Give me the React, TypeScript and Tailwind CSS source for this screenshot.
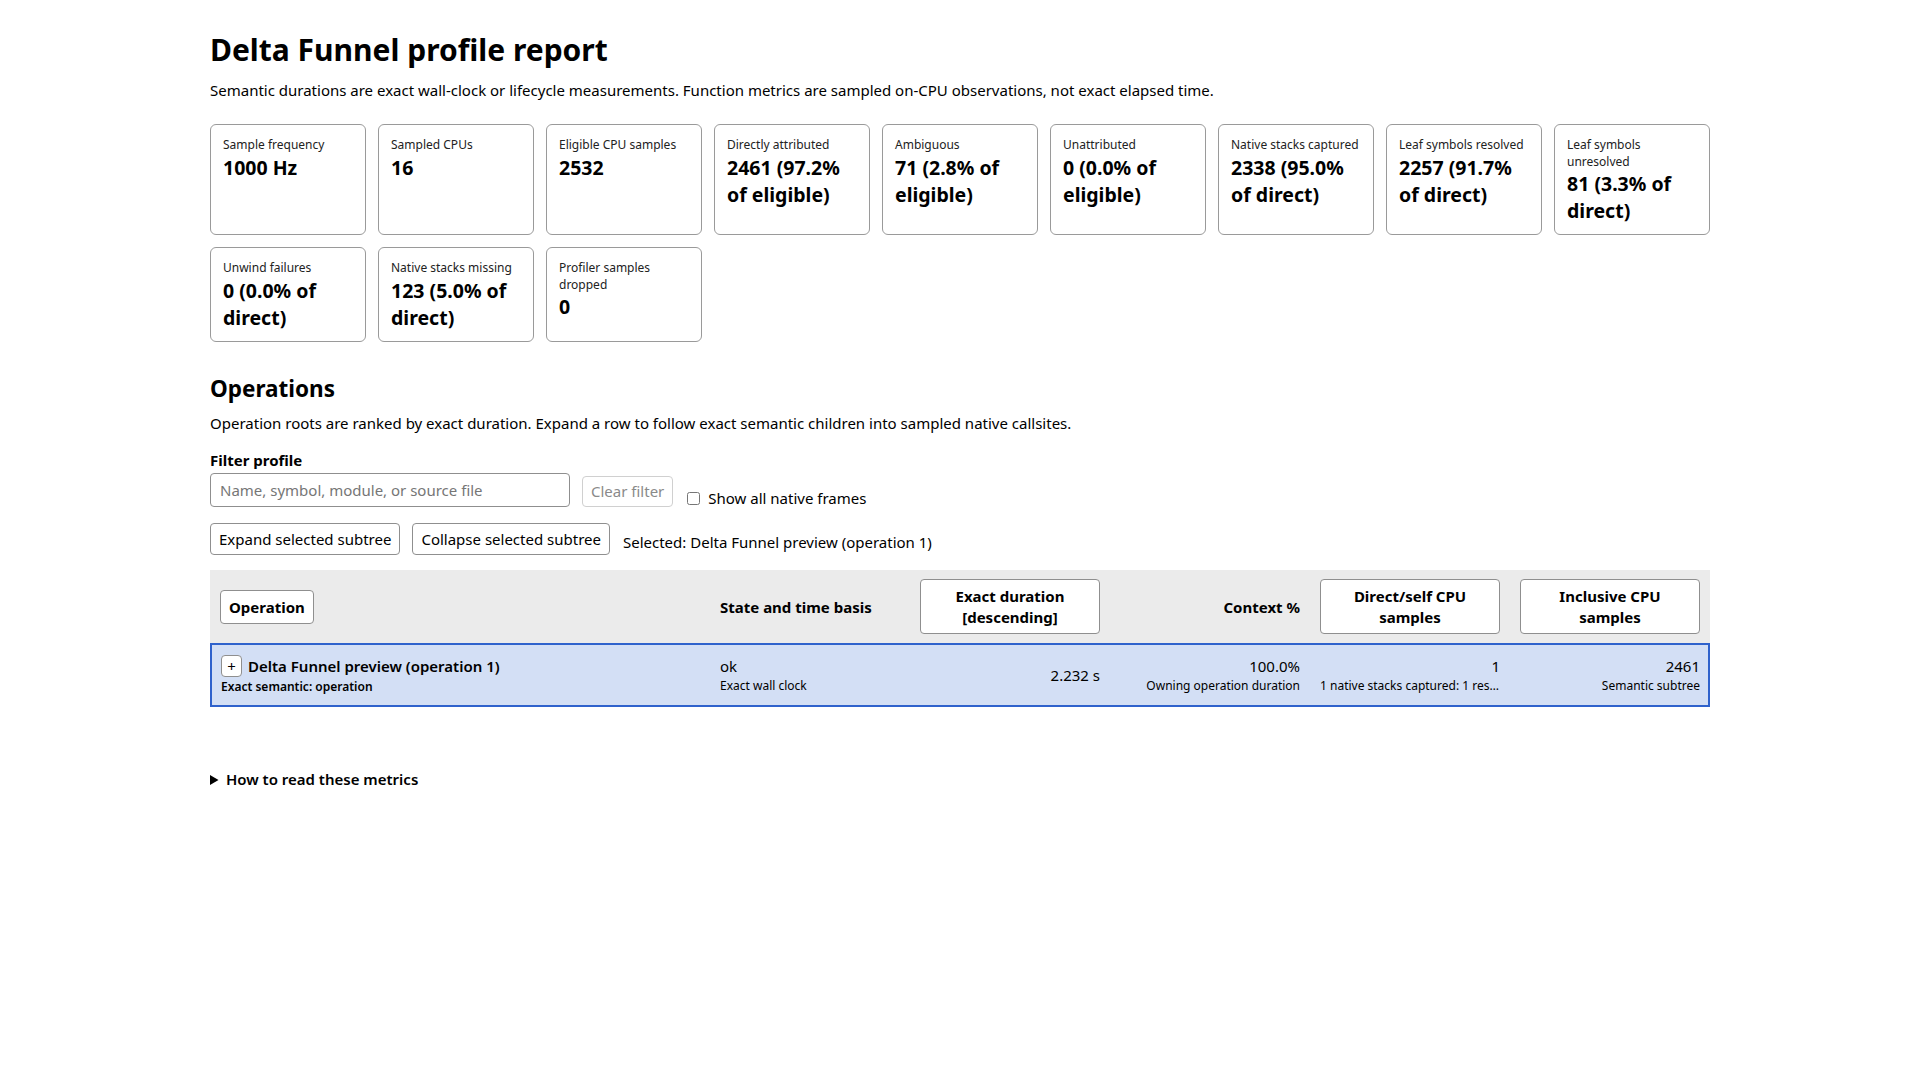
import { useState } from "react";

const cards = [
  { label: "Sample frequency", value: "1000 Hz" },
  { label: "Sampled CPUs", value: "16" },
  { label: "Eligible CPU samples", value: "2532" },
  { label: "Directly attributed", value: "2461 (97.2% of eligible)" },
  { label: "Ambiguous", value: "71 (2.8% of eligible)" },
  { label: "Unattributed", value: "0 (0.0% of eligible)" },
  { label: "Native stacks captured", value: "2338 (95.0% of direct)" },
  { label: "Leaf symbols resolved", value: "2257 (91.7% of direct)" },
  { label: "Leaf symbols unresolved", value: "81 (3.3% of direct)" },
  { label: "Unwind failures", value: "0 (0.0% of direct)" },
  { label: "Native stacks missing", value: "123 (5.0% of direct)" },
  { label: "Profiler samples dropped", value: "0" },
];

function SortButton({ children }: { children: React.ReactNode }) {
  return (
    <button className="w-full rounded-[4px] border border-[#8f8f8f] bg-white px-2 py-[6px] text-center text-[15px] font-bold leading-[20.4px] text-black">
      {children}
    </button>
  );
}

export default function App() {
  const [filter, setFilter] = useState("");
  const [showAll, setShowAll] = useState(false);

  return (
    <div className="min-h-screen bg-white font-['Noto_Sans',sans-serif] text-[15px] leading-[20.4px] text-black">
      <main className="mx-auto max-w-[1500px] pt-[29px]">
        <h1 className="text-[30px] font-bold leading-[41px]">Delta Funnel profile report</h1>
        <p className="mt-[10px]">
          Semantic durations are exact wall-clock or lifecycle measurements. Function metrics are sampled on-CPU
          observations, not exact elapsed time.
        </p>

        <div className="mt-[24px] grid grid-cols-9 gap-3">
          {cards.map((c) => (
            <div key={c.label} className="rounded-[6px] border border-[#9a9a9a] px-3 pb-[10px] pt-3">
              <div className="text-[12px] leading-[16.4px] text-[#222]">{c.label}</div>
              <div className="text-[19.5px] font-bold leading-[27px]">{c.value}</div>
            </div>
          ))}
        </div>

        <h2 className="mt-[32px] text-[22.5px] font-bold leading-[30.6px]">Operations</h2>
        <p className="mt-[9px]">
          Operation roots are ranked by exact duration. Expand a row to follow exact semantic children into sampled
          native callsites.
        </p>

        <div className="mt-[16px]">
          <label className="block font-bold">Filter profile</label>
          <div className="mt-[3px] flex items-start">
            <input
              value={filter}
              onChange={(e) => setFilter(e.target.value)}
              placeholder="Name, symbol, module, or source file"
              className="h-[34px] w-[360px] rounded-[4px] border border-[#8f8f8f] px-[9px] text-[15px] placeholder:text-[#767676]"
            />
            <button
              disabled
              className="ml-[12px] mt-[3px] h-[31px] rounded-[4px] border border-[#d0d0d0] px-[8px] text-[15px] text-[#8a8a8a]"
            >
              Clear filter
            </button>
            <label className="ml-[14px] mt-[15px] flex items-center gap-[8px]">
              <input
                type="checkbox"
                checked={showAll}
                onChange={(e) => setShowAll(e.target.checked)}
                className="h-[13px] w-[13px]"
              />
              Show all native frames
            </label>
          </div>
          <div className="mt-[15px] flex items-start gap-3">
            <button className="h-[32px] rounded-[4px] border border-[#8f8f8f] px-[8px]">Expand selected subtree</button>
            <button className="h-[32px] rounded-[4px] border border-[#8f8f8f] px-[8px]">Collapse selected subtree</button>
            <span className="ml-[1px] mt-[9px]">Selected: Delta Funnel preview (operation 1)</span>
          </div>
        </div>

        <div className="mt-[15px]">
          <div className="grid grid-cols-[500px_200px_200px_200px_200px_200px] items-center bg-[#ebebeb] py-[9px]">
            <div className="px-[10px]">
              <button className="rounded-[4px] border border-[#8f8f8f] bg-white px-[8px] py-[5.5px] font-bold">
                Operation
              </button>
            </div>
            <div className="px-[10px] font-bold">State and time basis</div>
            <div className="px-[10px]">
              <SortButton>
                Exact duration
                <br />
                [descending]
              </SortButton>
            </div>
            <div className="px-[10px] text-right font-bold">Context %</div>
            <div className="px-[10px]">
              <SortButton>
                Direct/self CPU
                <br />
                samples
              </SortButton>
            </div>
            <div className="px-[10px]">
              <SortButton>
                Inclusive CPU
                <br />
                samples
              </SortButton>
            </div>
          </div>

          <div className="grid grid-cols-[498px_200px_200px_200px_200px_198px] items-center border-2 border-[#2f62cc] bg-[#d3dff5] pb-[9px] pt-[10px]">
            <div className="pl-[9px] pr-[10px]">
              <div className="flex items-center gap-[6px]">
                <button className="flex h-[22px] w-[21px] items-center justify-center rounded-[4px] border border-[#8f8f8f] bg-white text-[15px] leading-none">
                  +
                </button>
                <span className="font-semibold">Delta Funnel preview (operation 1)</span>
              </div>
              <div className="mt-[2px] text-[12px] font-semibold leading-[16.4px]">Exact semantic: operation</div>
            </div>
            <div className="px-[10px]">
              <div>ok</div>
              <div className="mt-[2px] text-[12px] leading-[16.4px]">Exact wall clock</div>
            </div>
            <div className="px-[10px] text-right">2.232 s</div>
            <div className="px-[10px] text-right">
              <div>100.0%</div>
              <div className="mt-[2px] truncate text-[12px] leading-[16.4px]">Owning operation duration</div>
            </div>
            <div className="px-[10px] text-right">
              <div>1</div>
              <div className="mt-[2px] truncate text-[12px] leading-[16.4px]">
                1 native stacks captured: 1 resolved leaf symbols
              </div>
            </div>
            <div className="pl-[10px] pr-[8px] text-right">
              <div>2461</div>
              <div className="mt-[2px] truncate text-[12px] leading-[16.4px]">Semantic subtree</div>
            </div>
          </div>
        </div>

        <details className="mt-[62px]">
          <summary className="cursor-pointer font-semibold">How to read these metrics</summary>
          <p className="mt-2">
            Exact durations come from semantic lifecycle events. CPU sample counts are statistical observations.
          </p>
        </details>
      </main>
    </div>
  );
}
